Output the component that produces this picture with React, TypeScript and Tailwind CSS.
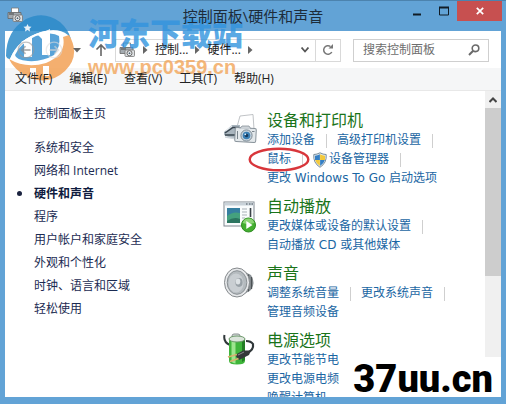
import React from 'react';

interface LinkItem {
    label: string;
    shield?: boolean;
    circled?: boolean;
    divider?: boolean;
}

interface Category {
    title: string;
    icon: React.ReactNode;
    rows: LinkItem[][];
}

const PrinterIcon = ({ className }: { className?: string }) => (
    <svg viewBox="0 0 16 16" className={className}>
        <path d="M4.5 1h7v5h-7z" fill="#fff" stroke="#777" strokeWidth=".8" />
        <path d="M1 5.5h13v6H1z" fill="#a4abb0" stroke="#666" strokeWidth=".8" />
        <path d="M2 7h5" stroke="#444" />
        <rect x="6" y="8" width="9.5" height="6.5" rx="1" fill="#dcdfe1" stroke="#777" strokeWidth=".8" />
        <circle cx="10.5" cy="11.2" r="2.5" fill="#fff" stroke="#666" />
        <circle cx="10.5" cy="11.2" r="1" fill="#4b6273" />
    </svg>
);

const DevicesIcon = () => (
    <svg viewBox="0 0 34 34" className="w-[34px] h-[34px]">
        <path d="M14 14 L17 3 L30 1.500 L31 16z" fill="#fff" stroke="#b0b4b8" strokeWidth=".8" />
        <path d="M1 19 L9 12 L17 12 L17 27 L7 25 L1 22z" fill="#a9b5be" />
        <path d="M2 20 L10 14.500 L16 14.500 M2 22 L15 22" stroke="#39454f" strokeWidth="1.400" fill="none" />
        <path d="M2 24 L14 26" stroke="#cfd6dc" strokeWidth="1.500" />
        <path d="M3 17.500 L9 13" stroke="#eef2f5" />
        <rect x="12" y="15" width="21" height="14" rx="1.500" fill="#e3e8eb" stroke="#88929a" transform="rotate(3 23 22)" />
        <path d="M17 15.500l2-2.500h7l2 3" fill="#cdd3d8" stroke="#88929a" strokeWidth=".8" />
        <circle cx="23.500" cy="22.500" r="5.600" fill="#c5d2dc" stroke="#7d8b96" />
        <circle cx="23.500" cy="22.500" r="3.800" fill="#397fb5" />
        <circle cx="23.500" cy="22.500" r="1.800" fill="#173a5d" />
        <circle cx="22.300" cy="21.300" r=".9" fill="#d9efff" />
        <path d="M29 18.500h2.500M14.500 18v8" stroke="#7a858d" />
    </svg>
);

const AutoPlayIcon = () => (
    <svg viewBox="0 0 34 34" className="w-[34px] h-[34px]">
        <rect x="1" y="3" width="30" height="24" fill="#fafcfd" stroke="#808890" />
        <path d="M1.5 3.500h29v3h-29z" fill="#c9d2d9" />
        <path d="M23 5h1.500M26 5h1.500M28.500 5H30" stroke="#46515a" />
        <rect x="4" y="9" width="13" height="15" fill="#367fa0" />
        <path d="M4 17 Q10 12 17 14V24H4z" fill="#44a17e" />
        <path d="M4 22 Q11 17 17 20V24H4z" fill="#2c7560" />
        <path d="M19 10h5M19 13h5M19 16h5M19 19h3" stroke="#a9b1b7" />
        <path d="M27.500 9v9" stroke="#3a4148" strokeWidth="1.600" />
        <circle cx="25.500" cy="26" r="7" fill="#43ae30" stroke="#2e8d20" />
        <path d="M19.700 24a6 6 0 0 1 11.600 0q-6 2-11.600 0z" fill="#8cd575" />
        <path d="M23.300 22v8l6.200-4z" fill="#fff" />
    </svg>
);

const SpeakerIcon = () => (
    <svg viewBox="0 0 34 34" className="w-[34px] h-[34px]">
        <path d="M18 4 L28 9 Q33 17 28 24 L18 30z" fill="#8d9397" />
        <path d="M25.500 8.500v17M28.500 11v12" stroke="#4b5154" strokeWidth="1.300" />
        <ellipse cx="14" cy="16.500" rx="12.500" ry="14.500" fill="#e6e8ea" stroke="#85898c" />
        <ellipse cx="14" cy="16.500" rx="9.800" ry="11.800" fill="#b4babe" stroke="#8a9094" />
        <ellipse cx="13" cy="17" rx="7.500" ry="9.500" fill="#c9ced2" />
        <ellipse cx="16" cy="16.500" rx="3.600" ry="4.400" fill="#99a1a7" />
        <ellipse cx="15" cy="15.500" rx="2.300" ry="3" fill="#dde2e5" />
    </svg>
);

const BatteryIcon = () => (
    <svg viewBox="0 0 34 34" className="w-[34px] h-[34px]">
        <path d="M1.500 2 Q0 9 7 12" fill="none" stroke="#30383a" strokeWidth="2" />
        <rect x="9" y="1" width="8" height="5" rx="2" fill="#d5dada" stroke="#8a9090" />
        <path d="M6 6v22q0 3.500 8 3.500t8-3.500V6z" fill="#3fb53b" />
        <path d="M8.500 8v21q2 1.200 4 1.400V8z" fill="#9de58e" />
        <path d="M19 8v21l3-2V6z" fill="#237d24" />
        <ellipse cx="14" cy="6" rx="8" ry="3" fill="#dce5dc" stroke="#6d9a6b" />
        <path d="M24 20 Q31 17 30 11 Q28 8 23 8" fill="none" stroke="#30383a" strokeWidth="2.200" />
        <path d="M12 22 L20 17.500 L28 17.500 L26 22 L16 27z" fill="#35383a" />
        <path d="M14 21.500 L5 24M15.500 25.500 L7 28.500" stroke="#d9b16e" strokeWidth="1.800" />
        <path d="M15 22l6-3" stroke="#8a8d8e" />
    </svg>
);

const ShieldIcon = () => (
    <svg viewBox="0 0 14 16" className="w-3.5 h-4 shrink-0">
        <path d="M7 .8 Q10 2.500 13.200 2.500 Q14 11 7 15.300 Q0 11 .8 2.500 Q4 2.500 7 .8z" fill="#e7eef4" stroke="#6b8190" strokeWidth=".9" />
        <path d="M6.900 2.300 Q4.500 3.700 2 3.700V8h4.900z" fill="#347fc4" />
        <path d="M7.100 2.300 Q9.500 3.700 12 3.700V8H7.100z" fill="#f3c93b" />
        <path d="M2.100 8.100h4.800V14Q3 11.500 2.100 8.100z" fill="#f3c93b" />
        <path d="M11.900 8.100H7.100V14q3.900-2.500 4.800-5.900z" fill="#347fc4" />
    </svg>
);

const Triangle = () => (
    <svg viewBox="0 0 5 8" className="w-[5px] h-2 shrink-0">
        <path d="M0 0l4.500 4L0 8z" fill="#666" />
    </svg>
);

const menus = ['文件(F)', '编辑(E)', '查看(V)', '工具(T)', '帮助(H)'];

const sidebar = [
    '系统和安全',
    '网络和 Internet',
    '硬件和声音',
    '程序',
    '用户帐户和家庭安全',
    '外观和个性化',
    '时钟、语言和区域',
    '轻松使用',
];

const categories: Category[] = [
    {
        title: '设备和打印机',
        icon: <DevicesIcon />,
        rows: [
            [{ label: '添加设备', divider: true }, { label: '高级打印机设置', divider: true }],
            [{ label: '鼠标', circled: true, divider: true }, { label: '设备管理器', shield: true, divider: true }],
            [{ label: '更改 Windows To Go 启动选项' }],
        ],
    },
    {
        title: '自动播放',
        icon: <AutoPlayIcon />,
        rows: [
            [{ label: '更改媒体或设备的默认设置', divider: true }],
            [{ label: '自动播放 CD 或其他媒体' }],
        ],
    },
    {
        title: '声音',
        icon: <SpeakerIcon />,
        rows: [
            [{ label: '调整系统音量', divider: true }, { label: '更改系统声音', divider: true }],
            [{ label: '管理音频设备' }],
        ],
    },
    {
        title: '电源选项',
        icon: <BatteryIcon />,
        rows: [
            [{ label: '更改节能节电' }],
            [{ label: '更改电源电频' }],
            [{ label: '唤醒计算机' }],
        ],
    },
];

const TitleBar = () => (
    <header className="grid grid-cols-[1fr_auto_1fr] h-[31px] shrink-0 border-t border-[#4c83ae]">
        <PrinterIcon className="relative z-10 w-4 h-4 ml-[7px] mt-1.5" />
        <h1 className="relative z-10 text-[15px] leading-[30px] text-[#1d2c3a]">控制面板\硬件和声音</h1>
        <div className="flex justify-end pr-1">
            <button aria-label="最小化" className="w-[27px] h-5 flex items-center justify-center">
                <svg viewBox="0 0 12 12" className="w-3 h-3"><path d="M2 9.500h8" stroke="#111c26" strokeWidth="2" /></svg>
            </button>
            <button aria-label="最大化" className="w-[27px] h-5 flex items-center justify-center">
                <svg viewBox="0 0 12 12" className="w-3 h-3"><path d="M1.500 2v8h9V2" fill="none" stroke="#111c26" strokeWidth="1" /><path d="M1 2.500h10" stroke="#111c26" strokeWidth="2" /></svg>
            </button>
            <button aria-label="关闭" className="w-[45px] h-5 bg-[#c75050] flex items-center justify-center">
                <svg viewBox="0 0 8 8" className="w-2 h-2"><path d="M.8.800l6.400 6.400M7.200.800L.800 7.200" stroke="#fff" strokeWidth="1.700" /></svg>
            </button>
        </div>
    </header>
);

const Toolbar = () => (
    <div className="flex items-center h-[37px] shrink-0 px-3 pt-px">
        <button aria-label="后退" className="relative z-10 shrink-0 opacity-60">
            <svg viewBox="0 0 18 18" className="w-[18px] h-[18px]">
                <circle cx="9" cy="9" r="7.800" fill="none" stroke="#9a9a9a" strokeWidth="1.300" />
                <path d="M13.500 9H5M8.500 5.200L4.700 9l3.800 3.800" fill="none" stroke="#888" strokeWidth="1.800" />
            </svg>
        </button>
        <button aria-label="前进" className="relative z-10 shrink-0 ml-2.5 opacity-60">
            <svg viewBox="0 0 18 18" className="w-[18px] h-[18px]">
                <circle cx="9" cy="9" r="7.800" fill="none" stroke="#dedede" strokeWidth="1.200" />
                <path d="M4.500 9H13M9.500 5.200L13.300 9l-3.800 3.800" fill="none" stroke="#d4d4d4" strokeWidth="1.800" />
            </svg>
        </button>
        <button aria-label="最近位置" className="relative z-10 shrink-0 ml-2.5">
            <svg viewBox="0 0 8 5" className="w-2 h-[5px]"><path d="M0 0h8L4 4.500z" fill="#666" /></svg>
        </button>
        <button aria-label="上移" className="shrink-0 ml-3.5">
            <svg viewBox="0 0 12 14" className="w-3 h-3.5"><path d="M6 13V2M1.500 6.500L6 2l4.500 4.500" fill="none" stroke="#666" strokeWidth="1.600" /></svg>
        </button>
        <div className="flex items-center flex-1 min-w-0 h-[23px] ml-2 border border-[#d9d9d9] pl-[3px]">
            <PrinterIcon className="w-4 h-4 shrink-0" />
            <nav className="relative z-10 flex items-center flex-1 min-w-0 gap-[7px] pl-2 whitespace-nowrap">
                <Triangle />
                <a href="#panel">控制...</a>
                <Triangle />
                <a href="#hardware">硬件...</a>
                <Triangle />
            </nav>
            <button aria-label="历史" className="shrink-0 mr-1.5">
                <svg viewBox="0 0 8 6" className="w-2 h-1.5"><path d="M.5.500L4 4.500 7.500.500" fill="none" stroke="#555" strokeWidth="1.800" /></svg>
            </button>
            <button aria-label="刷新" className="w-[25px] h-full shrink-0 border-l border-[#d9d9d9] flex items-center justify-center">
                <svg viewBox="0 0 12 12" className="w-3 h-3">
                    <path d="M9.800 8A4.300 4.300 0 1 1 8.500 2.500" fill="none" stroke="#777" strokeWidth="1.500" />
                    <path d="M6.500 4.500h4.500V0z" fill="#777" />
                </svg>
            </button>
        </div>
        <label className="flex items-center w-[136px] shrink-0 h-[23px] ml-3 border border-[#cfcfcf] pl-[9px] pr-2">
            <input aria-label="搜索" placeholder="搜索控制面板" className="flex-1 min-w-0 outline-none placeholder:text-[#6d6d6d]" />
            <svg viewBox="0 0 12 12" className="w-3 h-3">
                <circle cx="7.500" cy="4.300" r="3.300" fill="none" stroke="#6a6a6a" strokeWidth="1.600" />
                <path d="M5.200 6.800L1 11" stroke="#6a6a6a" strokeWidth="2" />
            </svg>
        </label>
    </div>
);

const Sidebar = () => (
    <nav className="w-[218px] shrink-0 pt-[11px] pl-[29px] text-[#1b2b52]">
        <a href="#home" className="block leading-[23px] mb-[11px]">控制面板主页</a>
        <ul>
            {sidebar.map((name) => {
                const active = name === '硬件和声音';
                return (
                    <li key={name} className="relative h-[23px] leading-[23px]">
                        {active && <span className="absolute -left-[17px] top-[9px] w-[5px] h-[5px] rounded-full bg-[#1b2340]" />}
                        <a href="#category" className={active ? 'font-bold text-[#101c40]' : ''}>{name}</a>
                    </li>
                );
            })}
        </ul>
    </nav>
);

const CategoryBlock = ({ title, icon, rows }: Category) => (
    <section className="flex gap-2.5">
        <div className="shrink-0 pt-0.5">{icon}</div>
        <div className="whitespace-nowrap">
            <h2 className="text-base leading-5">
                <a href="#open" className="text-[#1a741a]">{title}</a>
            </h2>
            {rows.map((row) => (
                <div key={row[0].label} className="flex items-center h-[19px]">
                    {row.map((item) => (
                        <React.Fragment key={item.label}>
                            {item.shield && <span className="mr-0.5"><ShieldIcon /></span>}
                            <a href="#task" className="relative leading-[19px] text-[#1a66a3]">
                                {item.label}
                                {item.circled && (
                                    <svg viewBox="0 0 62 25" className="absolute -left-[19px] -top-[3px] w-[62px] h-[25px] max-w-none">
                                        <ellipse cx="31" cy="12.500" rx="29.300" ry="10.800" fill="none" stroke="#d8363b" strokeWidth="2.400" />
                                    </svg>
                                )}
                            </a>
                            {item.divider && <span className="w-px h-3.5 bg-[#cfcfcf] ml-[11px] mr-2.5" />}
                        </React.Fragment>
                    ))}
                </div>
            ))}
        </div>
    </section>
);

const Scrollbar = () => (
    <div className="w-4 shrink-0 bg-[#f0f0f0] flex flex-col">
        <button aria-label="向上滚动" className="h-[17px] shrink-0 flex items-center justify-center">
            <svg viewBox="0 0 8 6" className="w-2 h-1.5"><path d="M.5 5L4 1.500 7.500 5" fill="none" stroke="#444" strokeWidth="2" /></svg>
        </button>
        <div className="h-[55%] bg-[#cdcdcd]" />
    </div>
);

const SiteWatermark = () => (
    <div className="absolute left-1.5 top-[13px] flex items-center gap-3 pointer-events-none">
        <svg viewBox="0 0 70 68" className="w-[70px] h-[68px] opacity-85">
            <path d="M0 43 Q0 18 20 6 Q38 -3 54 9 Q62 16 65 26 Q52 14 35 19 Q12 26 4 46 Q1 46 0 43z" fill="#2d8bca" />
            <path d="M4 46 Q12 26 35 19 Q52 14 62 22 Q63 42 40 51 Q20 57 3 46z" fill="#fff" />
            <path d="M9 42 Q14 30 30 23 Q46 18 53 23 Q55 34 48 42 Q36 49 22 48 Q10 47 9 42z" fill="#3b94d2" />
            <path d="M15 29l11-6v21h-8V31z" fill="#fff" />
            <path d="M32 22l12-6v26h-8V26z" fill="#fff" />
            <path d="M63 22 Q75 42 59 58 Q43 73 22 64 Q8 57 3 46 Q20 56 40 50 Q61 41 57 24z" fill="#f3a256" />
            <path d="M24 55h6v9h-6zM37 53h6v10h-6z" fill="#fff" />
            <path d="M21.500 11l1.200 2.500 2.800.300-2 1.900.500 2.800-2.500-1.400-2.500 1.400.500-2.800-2-1.900 2.800-.300z" fill="#fff" />
        </svg>
        <div className="flex flex-col gap-1 whitespace-nowrap opacity-80">
            <span className="text-[31px] leading-9 font-black text-[#3294de]">河东下载站</span>
            <span className="font-['Liberation_Sans',sans-serif] text-xl leading-6 font-bold text-[#f2a65a]">www.pc0359.cn</span>
        </div>
    </div>
);

const App: React.FC = () => (
    <div className="relative flex flex-col h-screen overflow-hidden bg-[#62a3d6] pb-[7px] font-['Open_Sans','Noto_Sans_CJK_SC',sans-serif] text-xs text-[#222]">
        <TitleBar />
        <div className="flex flex-col flex-1 min-h-0 mx-[5px] bg-white">
            <Toolbar />
            <div className="flex items-center gap-[17px] h-[23px] shrink-0 pl-2.5 bg-[#f5f6f7] border-b border-[#e8e8e8]">
                {menus.map((menu) => (
                    <button key={menu} className="relative z-10">{menu}</button>
                ))}
            </div>
            <div className="flex flex-1 min-h-0 overflow-hidden">
                <Sidebar />
                <main className="flex-1 min-w-0 flex flex-col gap-[9px] pt-5 overflow-hidden font-['DejaVu_Sans','Noto_Sans_CJK_SC',sans-serif]">
                    {categories.map((category) => (
                        <CategoryBlock key={category.title} {...category} />
                    ))}
                </main>
                <Scrollbar />
            </div>
        </div>

        <SiteWatermark />
        <div className="absolute right-[5px] bottom-[7px] bg-white pl-3.5 pr-2 pt-1 pointer-events-none">
            <span className="block font-['Roboto',sans-serif] text-[38px] leading-9 font-black text-black">37uu.cn</span>
        </div>
    </div>
);

export default App;
